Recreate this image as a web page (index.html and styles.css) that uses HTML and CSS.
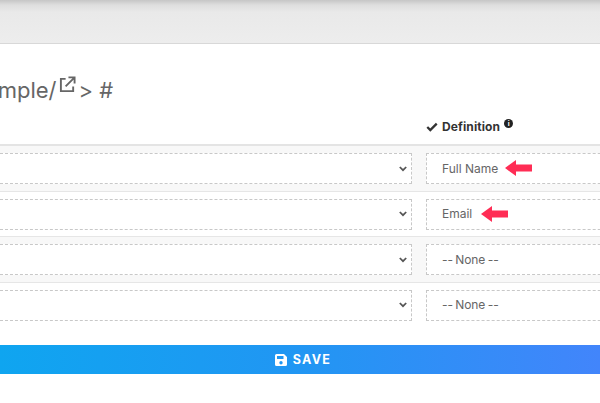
FILE: index.html
```html
<!DOCTYPE html>
<html lang="en">
<head>
<meta charset="utf-8">
<title>Mapping</title>
<link rel="stylesheet" href="styles.css">
</head>
<body>
<div class="topbar"></div>
<main class="panel">
  <div class="title-row">
    <h1 class="title">example/</h1>
    <svg class="ext" viewBox="0 0 18 18" width="17" height="17"><path d="M7 3H2v13h13v-5" fill="none" stroke="#666" stroke-width="2"/><path d="M7 11 16 2M10 1.500h6.500V8" fill="none" stroke="#666" stroke-width="2"/></svg>
    <span class="crumb">&gt; #</span>
  </div>
  <div class="head-row">
    <div class="col-a"></div>
    <div class="col-b head-label">
      <svg class="check" viewBox="0 0 14 11" width="12" height="10"><path d="M1.500 5.500 5 9l7.500-7.500" fill="none" stroke="#333" stroke-width="2.700"/></svg>
      <span class="head-text">Definition</span>
      <span class="info">i</span>
    </div>
  </div>
  <div class="row shade">
    <div class="col-a"><div class="box select"><svg class="chev" viewBox="0 0 10 7" width="8" height="6"><path d="M1 1l4 4 4-4" fill="none" stroke="#555" stroke-width="2.200"/></svg></div></div>
    <div class="col-b"><div class="box def"><span>Full Name</span><svg class="arrow" viewBox="0 0 27 16" width="27" height="16"><path d="M0 8 11 0v4.500h16v7H11V16z" fill="#ff2d55"/></svg></div></div>
  </div>
  <div class="row">
    <div class="col-a"><div class="box select"><svg class="chev" viewBox="0 0 10 7" width="8" height="6"><path d="M1 1l4 4 4-4" fill="none" stroke="#555" stroke-width="2.200"/></svg></div></div>
    <div class="col-b"><div class="box def"><span>Email</span><svg class="arrow arrow-email" viewBox="0 0 27 16" width="27" height="16"><path d="M0 8 11 0v4.500h16v7H11V16z" fill="#ff2d55"/></svg></div></div>
  </div>
  <div class="row shade">
    <div class="col-a"><div class="box select"><svg class="chev" viewBox="0 0 10 7" width="8" height="6"><path d="M1 1l4 4 4-4" fill="none" stroke="#555" stroke-width="2.200"/></svg></div></div>
    <div class="col-b"><div class="box def"><span class="none">-- None --</span></div></div>
  </div>
  <div class="row">
    <div class="col-a"><div class="box select"><svg class="chev" viewBox="0 0 10 7" width="8" height="6"><path d="M1 1l4 4 4-4" fill="none" stroke="#555" stroke-width="2.200"/></svg></div></div>
    <div class="col-b"><div class="box def"><span class="none">-- None --</span></div></div>
  </div>
  <div class="save">
    <svg class="disk" viewBox="0 0 12 12" width="12" height="12"><path fill-rule="evenodd" d="M1.500 0H9l3 3v7.500A1.500 1.500 0 0 1 10.500 12h-9A1.500 1.500 0 0 1 0 10.500v-9A1.500 1.500 0 0 1 1.500 0zM2 2v3h6.500V2zM6 7a1.700 1.700 0 1 0 0 3.400A1.700 1.700 0 0 0 6 7z" fill="#fff"/></svg>
    <span>SAVE</span>
  </div>
</main>
</body>
</html>
```

FILE: styles.css
```css
html, body {
  margin: 0;
  padding: 0;
  width: 600px;
  height: 403px;
  overflow: hidden;
  background: #fff;
  font-family: Inter, "Open Sans", "Liberation Sans", sans-serif;
  color: #666;
}
.topbar {
  box-sizing: border-box;
  height: 44px;
  background: linear-gradient(#c6c6c6 0, #dedede 5px, #e9e9e9 12px, #ededed 100%);
  border-bottom: 1px solid #d8d8d8;
}
.panel {
  width: 600px;
  overflow: hidden;
}
.title-row {
  display: flex;
  align-items: flex-start;
  height: 63px;
  padding-top: 31px;
  box-sizing: border-box;
  margin-left: -39px;
  white-space: nowrap;
}
.title {
  margin: 0;
  font-size: 22px;
  line-height: 30px;
  font-weight: 400;
  color: #666;
}
.ext {
  margin: 1px 0 0 2px;
}
.crumb {
  font-size: 22px;
  line-height: 30px;
  margin-left: 3px;
  color: #666;
}
.head-row {
  display: flex;
  height: 39px;
  border-bottom: 2px solid #e4e4e4;
  box-sizing: border-box;
}
.row {
  display: flex;
  height: 45.600px;
  padding-top: 7px;
  box-sizing: border-box;
  border-bottom: 1.500px solid #e6e6e6;
}
.row:nth-last-child(2) {
  border-bottom: 0;
}
.shade {
  background: #f8f8f8;
}
.col-a {
  width: 412px;
  flex: none;
}
.col-b {
  margin-left: 14px;
  flex: none;
  width: 200px;
}
.head-label {
  display: flex;
  align-items: center;
  gap: 3px;
  height: 39px;
  font-size: 12px;
  font-weight: 700;
  color: #333;
}
.head-text {
  margin-left: 1px;
  letter-spacing: 0.100px;
}
.info {
  width: 9px;
  height: 9px;
  border-radius: 50%;
  background: #222;
  color: #fff;
  font-size: 7px;
  line-height: 9px;
  text-align: center;
  margin: -7px 0 0 1px;
}
.box {
  height: 31px;
  box-sizing: border-box;
  border: 1px dashed #c8c8c8;
  background: #fff;
  display: flex;
  align-items: center;
}
.select {
  justify-content: flex-end;
  padding-right: 4px;
  border-left: 0;
}
.chev {
  display: block;
}
.def {
  padding-left: 15px;
  padding-bottom: 1px;
  font-size: 12px;
  color: #666;
  gap: 7px;
}
.none {
  word-spacing: -0.800px;
  letter-spacing: -0.100px;
}
.arrow-email {
  margin-left: 2px;
}
.save {
  margin-top: 17px;
  height: 29px;
  padding-left: 6px;
  box-sizing: border-box;
  display: flex;
  align-items: center;
  justify-content: center;
  gap: 6px;
  background: linear-gradient(90deg, #0fa5f0 0, #2196f3 50%, #4285fb 100%);
  color: #fff;
  font-size: 12.500px;
  font-weight: 700;
  letter-spacing: 1.300px;
}
```
